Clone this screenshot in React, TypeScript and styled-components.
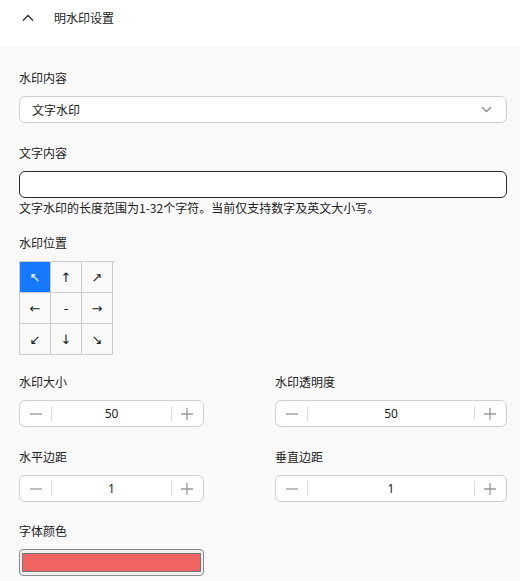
import React from "react";
import styled, { createGlobalStyle } from "styled-components";

const Global = createGlobalStyle`
  html, body { margin: 0; padding: 0; background: #f9f9f9; }
  body {
    font-family: "Noto Sans CJK SC", "Noto Sans", sans-serif;
    font-size: 12px;
    color: #222;
  }
  * { box-sizing: border-box; }
`;

const Page = styled.div`
  width: 520px;
  min-height: 581px;
  background: #f9f9f9;
`;

const Header = styled.div`
  background: #fff;
  height: 46px;
  display: flex;
  align-items: flex-start;
  padding: 8px 0 0 22px;
  gap: 20px;
`;

const HeaderIcon = styled.span`
  display: flex;
  align-items: center;
  height: 20px;
`;

const Title = styled.span`
  font-size: 12px;
  line-height: 20px;
  color: #222;
`;

const Body = styled.div`
  padding: 22px 13px 0 19px;
  display: flex;
  flex-direction: column;
`;

const Item = styled.div<{ $mb?: number }>`
  display: flex;
  flex-direction: column;
  margin-bottom: ${(p) => (p.$mb ?? 20)}px;
`;

const Label = styled.div`
  line-height: 20px;
  height: 20px;
  margin-bottom: 8px;
  color: #222;
`;

const Select = styled.div`
  height: 27px;
  background: #fff;
  border: 1px solid #cfcfcf;
  border-radius: 6px;
  display: flex;
  align-items: center;
  justify-content: space-between;
  padding: 0 14px 0 12px;
`;

const TextInput = styled.input`
  height: 27px;
  width: 100%;
  background: #fff;
  border: 1px solid #2a2a2a;
  border-radius: 6px;
  outline: none;
  padding: 0 10px;
  font: inherit;
`;

const Help = styled.div`
  line-height: 20px;
  color: #222;
`;

const GridWrap = styled.div`
  width: 96px;
  border-top: 1px solid #cccccc;
`;

const Grid = styled.div`
  display: grid;
  grid-template-columns: repeat(3, 31px);
  grid-auto-rows: 31px;
  width: 94px;
  border-left: 1px solid #cccccc;
`;

const Cell = styled.button<{ $active?: boolean }>`
  border: none;
  border-right: 1px solid #cccccc;
  border-bottom: 1px solid #cccccc;
  background: ${(p) => (p.$active ? "#1677ff" : "transparent")};
  color: ${(p) => (p.$active ? "#fff" : "#222")};
  font-family: "DejaVu Sans", sans-serif;
  font-size: 13px;
  padding: 0;
  margin: 0;
  display: flex;
  align-items: center;
  justify-content: center;
  cursor: pointer;
`;

const Row = styled.div`
  display: grid;
  grid-template-columns: 185px 232px;
  column-gap: 71px;
`;

const Stepper = styled.div`
  height: 27px;
  background: #fff;
  border: 1px solid #cfcfcf;
  border-radius: 6px;
  display: flex;
  align-items: center;
`;

const StepBtn = styled.span<{ $side: "left" | "right" }>`
  width: 32px;
  height: 100%;
  display: flex;
  align-items: center;
  justify-content: center;
  position: relative;
  &::after {
    content: "";
    position: absolute;
    top: 5px;
    bottom: 5px;
    ${(p) => (p.$side === "left" ? "right: 0;" : "left: 0;")}
    width: 1px;
    background: #dcdcdc;
  }
`;

const StepValue = styled.span`
  flex: 1;
  text-align: center;
  color: #222;
  font-family: "Noto Sans", sans-serif;
  font-size: 12px;
`;

const ColorInput = styled.input`
  width: 185px;
  height: 27px;
  padding: 0;
  border: 1px solid #8a8a8a;
  border-radius: 4px;
  background: #efefef;
  &::-webkit-color-swatch-wrapper { padding: 3px 2px; }
  &::-webkit-color-swatch { border: 1px solid #777; border-radius: 0; }
`;

const Minus = () => (
  <svg width="12" height="12" viewBox="0 0 12 12">
    <path d="M0 6h12" stroke="#999" strokeWidth="1.3" />
  </svg>
);
const Plus = () => (
  <svg width="12" height="12" viewBox="0 0 12 12">
    <path d="M0 6h12M6 0v12" stroke="#999" strokeWidth="1.3" />
  </svg>
);

const NumberField = ({ value }: { value: string }) => (
  <Stepper>
    <StepBtn $side="left">
      <Minus />
    </StepBtn>
    <StepValue>{value}</StepValue>
    <StepBtn $side="right">
      <Plus />
    </StepBtn>
  </Stepper>
);

const arrows = ["↖", "↑", "↗", "←", "-", "→", "↙", "↓", "↘"];

export default function App() {
  return (
    <Page>
      <Global />
      <Header>
        <HeaderIcon>
          <svg width="12" height="8" viewBox="0 0 12 8">
            <path d="M1 6.5L6 1.5L11 6.5" fill="none" stroke="#333" strokeWidth="1.5" />
          </svg>
        </HeaderIcon>
        <Title>明水印设置</Title>
      </Header>
      <Body>
        <Item>
          <Label>水印内容</Label>
          <Select>
            <span>文字水印</span>
            <svg width="11" height="7" viewBox="0 0 11 7">
              <path d="M1 1l4.5 4.5L10 1" fill="none" stroke="#888" strokeWidth="1.3" />
            </svg>
          </Select>
        </Item>
        <Item $mb={15}>
          <Label>文字内容</Label>
          <TextInput />
          <Help>文字水印的长度范围为1-32个字符。当前仅支持数字及英文大小写。</Help>
        </Item>
        <Item $mb={17}>
          <Label>水印位置</Label>
          <GridWrap>
            <Grid>
              {arrows.map((a, i) => (
                <Cell key={i} $active={i === 0}>
                  {a}
                </Cell>
              ))}
            </Grid>
          </GridWrap>
        </Item>
        <Row>
          <Item>
            <Label>水印大小</Label>
            <NumberField value="50" />
          </Item>
          <Item>
            <Label>水印透明度</Label>
            <NumberField value="50" />
          </Item>
        </Row>
        <Row>
          <Item $mb={19}>
            <Label>水平边距</Label>
            <NumberField value="1" />
          </Item>
          <Item $mb={19}>
            <Label>垂直边距</Label>
            <NumberField value="1" />
          </Item>
        </Row>
        <Item>
          <Label>字体颜色</Label>
          <ColorInput type="color" defaultValue="#f06464" />
        </Item>
      </Body>
    </Page>
  );
}
